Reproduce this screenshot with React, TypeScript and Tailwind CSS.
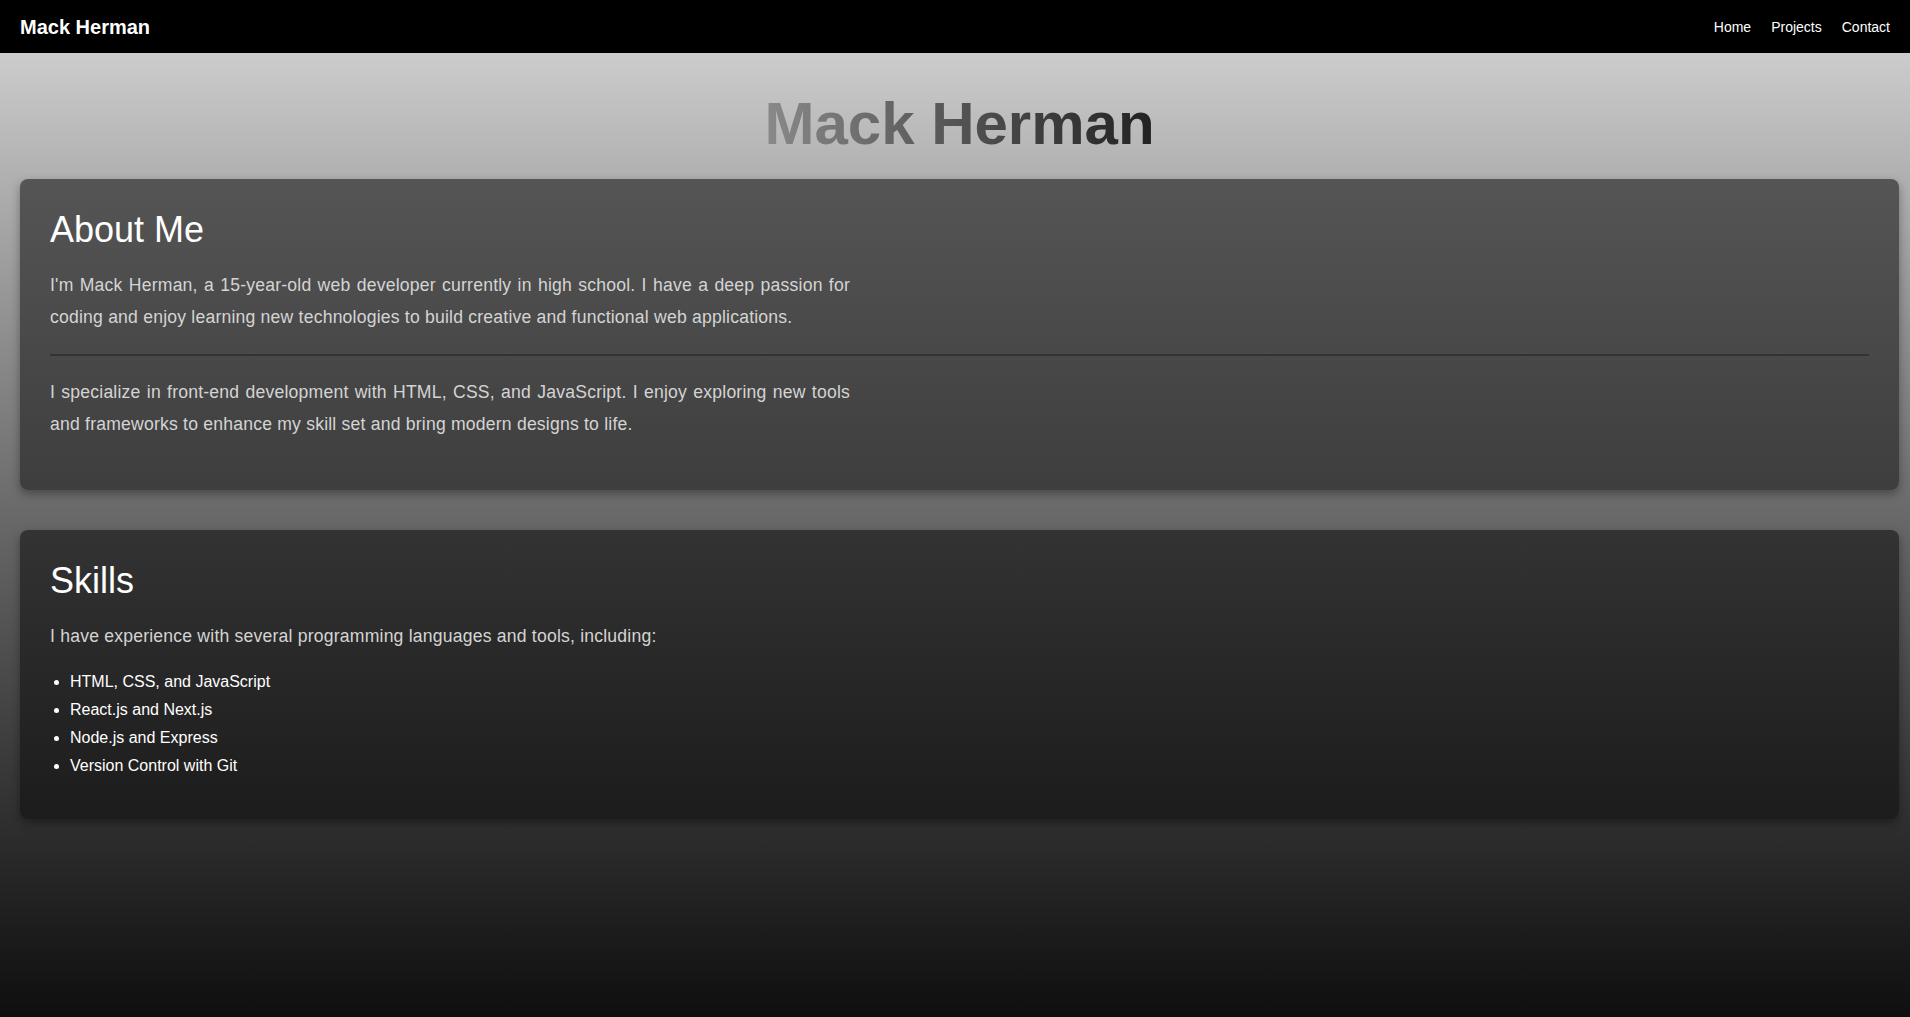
export default function App() {
  const skills = [
    "HTML, CSS, and JavaScript",
    "React.js and Next.js",
    "Node.js and Express",
    "Version Control with Git",
  ]

  return (
    <div className="flex flex-col min-h-screen font-['Liberation_Sans',Arial,sans-serif]">
      {/* Navbar */}
      <nav className="h-[53px] bg-black flex items-center justify-between px-[20px]">
        <span className="text-white text-[20px] font-bold">Mack Herman</span>
        <div className="flex gap-[20px] text-white text-[14px] mt-[2px]">
          <a href="#">Home</a>
          <a href="#">Projects</a>
          <a href="#">Contact</a>
        </div>
      </nav>

      <main className="flex-grow bg-gradient-to-b from-[#cccccc] to-[#0f0f0f] pl-[20px] pr-[11px] pb-10">
        {/* Heading */}
        <div className="text-center pt-[41px] mb-[25px]">
          <h1 className="inline-block text-[60px] leading-[60px] font-bold bg-gradient-to-r from-[#8a8a8a] to-[#222222] bg-clip-text text-transparent">
            Mack Herman
          </h1>
        </div>

        {/* About */}
        <section className="rounded-lg bg-gradient-to-b from-[#555555] to-[#3e3e3e] shadow-[0_4px_10px_rgba(0,0,0,0.35)] px-[30px] pt-[33px] pb-[49px]">
          <h2 className="text-white text-[36px] leading-[36px] mb-[22px]">About Me</h2>
          <p className="text-[#d4d4d4] text-[17.6px] leading-[1.8] tracking-[0.2px] text-justify max-w-[800px]">
            I'm Mack Herman, a 15-year-old web developer currently in high school. I have a deep passion for coding and enjoy learning new technologies to build creative and functional web applications.
          </p>
          <hr className="my-[21px] border-0 h-[2px] bg-[#333333]" />
          <p className="text-[#d4d4d4] text-[17.6px] leading-[1.8] tracking-[0.2px] text-justify max-w-[800px]">
            I specialize in front-end development with HTML, CSS, and JavaScript. I enjoy exploring new tools and frameworks to enhance my skill set and bring modern designs to life.
          </p>
        </section>

        {/* Skills */}
        <section className="mt-[40px] rounded-lg bg-gradient-to-b from-[#333333] to-[#1c1c1c] shadow-[0_4px_10px_rgba(0,0,0,0.35)] px-[30px] pt-[33px] pb-[39px]">
          <h2 className="text-white text-[36px] leading-[36px] mb-[22px]">Skills</h2>
          <p className="text-[#d4d4d4] text-[17.6px] leading-[1.8] tracking-[0.2px]">
            I have experience with several programming languages and tools, including:
          </p>
          <ul className="list-disc pl-[20px] mt-[16px] text-white text-[16px] leading-[28px]">
            {skills.map((s) => (
              <li key={s}>{s}</li>
            ))}
          </ul>
        </section>
      </main>
    </div>
  )
}
